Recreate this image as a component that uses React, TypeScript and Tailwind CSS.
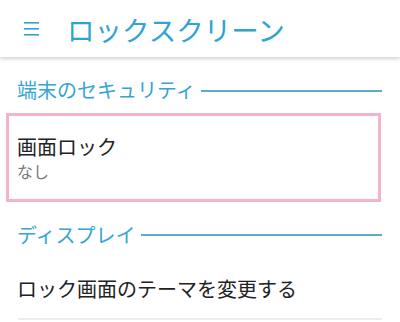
export default function App() {
  const font = { fontFamily: '"Noto Sans CJK JP", "Noto Sans", sans-serif' };
  return (
    <div className="w-[400px] h-[322px] bg-white overflow-hidden" style={font}>
      {/* Toolbar */}
      <div className="relative z-10 h-[57px] flex items-center bg-white shadow-[0_2px_4px_rgba(0,0,0,0.18)]">
        <svg className="ml-[24px]" width="15" height="14" viewBox="0 0 15 14">
          <rect x="0" y="0" width="15" height="1.6" fill="#2fa3d3" />
          <rect x="0" y="6" width="15" height="1.6" fill="#2fa3d3" />
          <rect x="0" y="12" width="15" height="1.6" fill="#2fa3d3" />
        </svg>
        <h1 className="ml-[28px] text-[27.5px] leading-[36px] text-[#2fa3d3]">ロックスクリーン</h1>
      </div>

      {/* 端末のセキュリティ */}
      <div className="mt-[18px] h-[30px] flex items-center pl-[17px] pr-[18px]">
        <span className="text-[20px] leading-[30px] text-[#35a5d3]">端末のセキュリティ</span>
        <div className="flex-1 h-[2px] ml-[5px] mt-[1px] bg-[#5aaccb]" />
      </div>

      <div className="mt-[8px] ml-[6px] w-[375px] h-[89px] border-[3px] border-[#f5b2cc] flex flex-col justify-center pl-[8px]">
        <div className="text-[20px] leading-[26px] text-[#222]">画面ロック</div>
        <div className="text-[16px] leading-[22px] text-[#777]">なし</div>
      </div>

      {/* ディスプレイ */}
      <div className="mt-[18px] h-[30px] flex items-center pl-[17px] pr-[18px]">
        <span className="text-[20px] leading-[30px] text-[#35a5d3]">ディスプレイ</span>
        <div className="flex-1 h-[2px] ml-[5px] bg-[#5aaccb]" />
      </div>

      <div className="h-[68px] pt-[10px] flex items-center pl-[17px]">
        <span className="text-[20px] leading-[28px] text-[#222]">ロック画面のテーマを変更する</span>
      </div>
      <div className="mx-[18px] h-[2px] bg-[#ececec]" />
    </div>
  );
}
